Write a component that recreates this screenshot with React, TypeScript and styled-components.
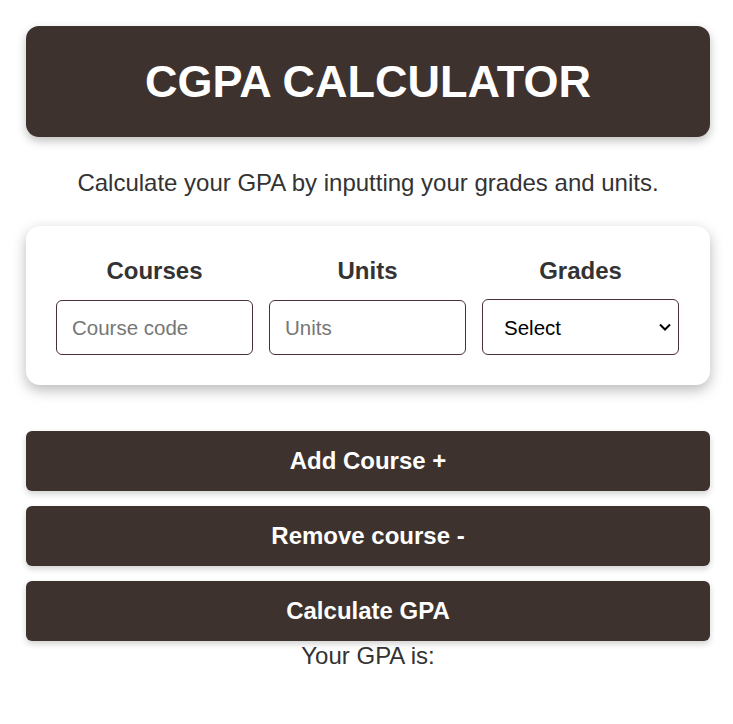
import React from "react";
import styled, { createGlobalStyle } from "styled-components";

const Global = createGlobalStyle`
  html, body { margin: 0; padding: 0; background: #ffffff; }
  body { font-family: "Liberation Sans", Arial, sans-serif; color: #333333; }
  * { box-sizing: border-box; }
`;

const Page = styled.div`
  padding: 26px 23px 40px 26px;
  display: flex;
  flex-direction: column;
`;

const Header = styled.header`
  height: 111px;
  background: #3e322e;
  border-radius: 13px;
  box-shadow: 0 4px 10px rgba(0, 0, 0, 0.25);
  display: flex;
  align-items: center;
  justify-content: center;
`;

const Title = styled.h1`
  margin: 0;
  color: #ffffff;
  font-size: 45px;
  font-weight: 700;
`;

const Subtitle = styled.p`
  margin: 33px 0 0;
  text-align: center;
  font-size: 24px;
  line-height: 26px;
  color: #333333;
`;

const Card = styled.section`
  margin-top: 30px;
  height: 159px;
  background: #ffffff;
  border-radius: 14px;
  box-shadow: 0 5px 14px rgba(0, 0, 0, 0.28);
  padding: 31px 31px 0 30px;
  display: grid;
  grid-template-columns: repeat(3, minmax(0, 1fr));
  column-gap: 16px;
`;

const Column = styled.div`
  display: flex;
  flex-direction: column;
  align-items: stretch;
  min-width: 0;
`;

const Label = styled.h3`
  margin: 0 0 16px;
  text-align: center;
  font-size: 24px;
  line-height: 27px;
  font-weight: 700;
  color: #333333;
`;

const Field = styled.input`
  width: 100%;
  min-width: 0;
  height: 55px;
  border: 1px solid #4a2f35;
  border-radius: 6px;
  padding: 0 15px;
  font-family: "Liberation Sans", Arial, sans-serif;
  font-size: 20.5px;
  color: #000;
  background: #fff;
  outline: none;
  &::placeholder { color: #767676; }
`;

const Select = styled.select`
  width: 100%;
  min-width: 0;
  height: 56px;
  margin-top: -1px;
  border: 1px solid #4a2f35;
  border-radius: 6px;
  padding: 0 0 0 21px;
  font-family: "Liberation Sans", Arial, sans-serif;
  font-size: 20.5px;
  color: #000;
  background: #fff;
  appearance: none;
  -webkit-appearance: none;
  background-image: url("data:image/svg+xml,%3Csvg xmlns='http://www.w3.org/2000/svg' width='12' height='8' viewBox='0 0 12 8'%3E%3Cpath d='M1 1.5l5 5 5-5' fill='none' stroke='%23000' stroke-width='2'/%3E%3C/svg%3E");
  background-repeat: no-repeat;
  background-position: right 7px center;
  outline: none;
`;

const Buttons = styled.div`
  margin-top: 46px;
  display: flex;
  flex-direction: column;
  gap: 15px;
`;

const Button = styled.button`
  height: 60px;
  border: none;
  border-radius: 6px;
  background: #3e322e;
  color: #ffffff;
  font-family: "Liberation Sans", Arial, sans-serif;
  font-size: 24px;
  font-weight: 700;
  box-shadow: 0 3px 6px rgba(0, 0, 0, 0.18);
  cursor: pointer;
`;

const Result = styled.p`
  margin: 1px 0 0;
  text-align: center;
  font-size: 24px;
  line-height: 27px;
  color: #333333;
`;

export default function App() {
  return (
    <>
      <Global />
      <Page>
        <Header>
          <Title>CGPA CALCULATOR</Title>
        </Header>
        <Subtitle>Calculate your GPA by inputting your grades and units.</Subtitle>
        <Card>
          <Column>
            <Label>Courses</Label>
            <Field placeholder="Course code" />
          </Column>
          <Column>
            <Label>Units</Label>
            <Field placeholder="Units" />
          </Column>
          <Column>
            <Label>Grades</Label>
            <Select defaultValue="">
              <option value="">Select</option>
              <option value="A">A</option>
              <option value="B">B</option>
              <option value="C">C</option>
              <option value="D">D</option>
              <option value="E">E</option>
              <option value="F">F</option>
            </Select>
          </Column>
        </Card>
        <Buttons>
          <Button>Add Course +</Button>
          <Button>Remove course -</Button>
          <Button>Calculate GPA</Button>
        </Buttons>
        <Result>Your GPA is:</Result>
      </Page>
    </>
  );
}
